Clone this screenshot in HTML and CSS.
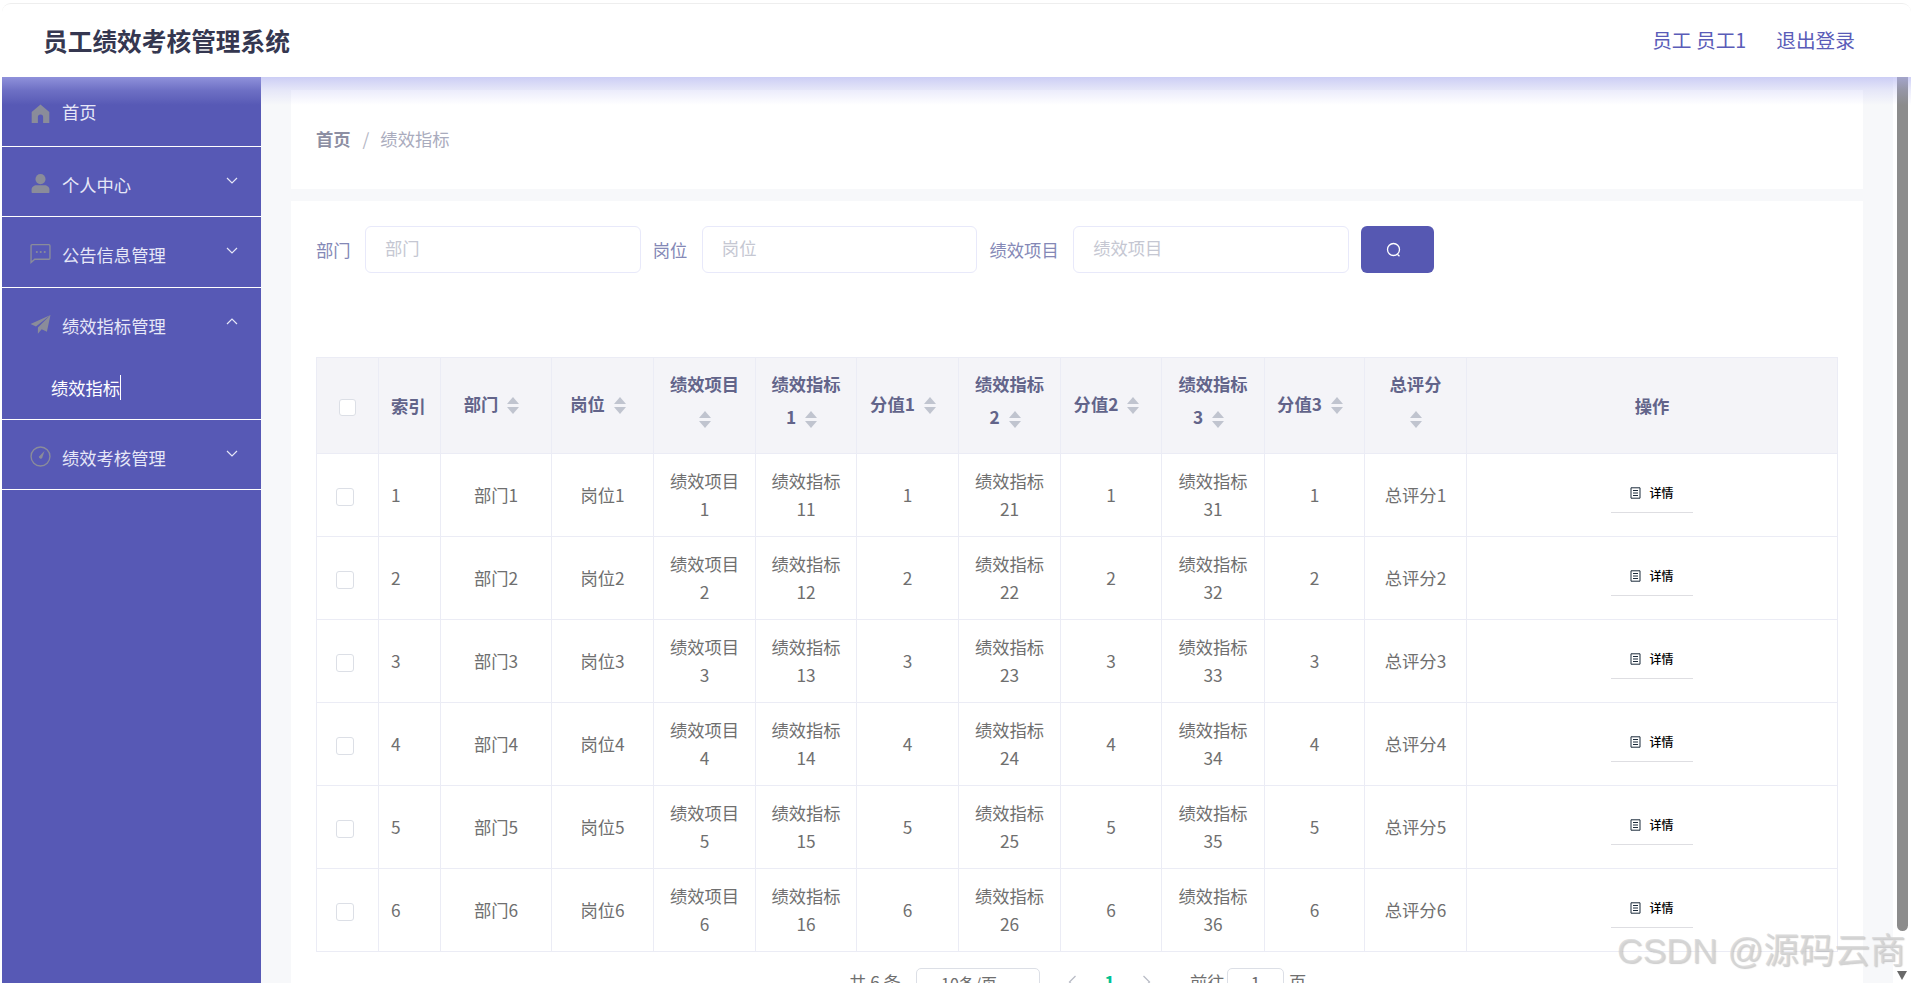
FILE: index.html
```html
<!DOCTYPE html>
<html lang="zh-CN">
<head>
<meta charset="utf-8">
<title>员工绩效考核管理系统</title>
<link rel="stylesheet" href="styles.css">
</head>
<body>
<div class="page">
  <header class="topbar">
    <div class="brand">员工绩效考核管理系统</div>
    <div class="user"><span>员工 员工1</span><span>退出登录</span></div>
  </header>
  <div class="shell">
    <div class="glow"></div>
    <aside class="sidebar">
      <div class="menu-item first">
        <svg class="mi" viewBox="0 0 20 20"><path d="M10 1.500 1.600 8.600V19h5.900v-5.600a2.500 2.500 0 0 1 5 0V19h5.900V8.600z"/></svg>
        <span>首页</span>
      </div>
      <div class="menu-item">
        <svg class="mi" viewBox="0 0 20 20"><circle cx="10" cy="5.800" r="4.800"/><path d="M1.500 18v-2.200c0-2.600 2.400-4.100 4.600-4.100h7.800c2.200 0 4.600 1.500 4.600 4.100V18c0 .6-.4 1-1 1h-15c-.6 0-1-.4-1-1z"/></svg>
        <span>个人中心</span>
        <svg class="chev" viewBox="0 0 12 7"><path d="M1 1l5 5 5-5"/></svg>
      </div>
      <div class="menu-item tall">
        <svg class="mi" viewBox="0 0 20 20"><path class="ol" d="M2 1.500h16a1 1 0 0 1 1 1v12a1 1 0 0 1-1 1H4.500L1 18.500V2.500a1 1 0 0 1 1-1z"/><circle cx="6.500" cy="8.500" r="1"/><circle cx="10.200" cy="8.500" r="1"/><circle cx="14" cy="8.500" r="1"/></svg>
        <span>公告信息管理</span>
        <svg class="chev" viewBox="0 0 12 7"><path d="M1 1l5 5 5-5"/></svg>
      </div>
      <div class="menu-group">
        <div class="group-head">
          <svg class="mi" viewBox="0 0 20 20"><path d="M19.500 1 .5 9.500l5.200 2.300zM19.500 1 7.500 12.800v6l3.600-4.300 5 2.500z"/></svg>
          <span>绩效指标管理</span>
          <svg class="chev" viewBox="0 0 12 7"><path d="M1 6l5-5 5 5"/></svg>
        </div>
        <div class="sub-item"><span class="sub-text">绩效指标</span></div>
      </div>
      <div class="menu-item">
        <svg class="mi" viewBox="0 0 20 20"><circle class="ol" cx="10" cy="10" r="9"/><path d="M13.800 4.800 11.600 11.500a1.900 1.900 0 0 1-3.200-1.300z"/></svg>
        <span>绩效考核管理</span>
        <svg class="chev" viewBox="0 0 12 7"><path d="M1 1l5 5 5-5"/></svg>
      </div>
    </aside>
    <main class="content">
      <section class="crumbs">
        <span class="crumb-home">首页</span><span class="crumb-sep">/</span><span class="crumb-now">绩效指标</span>
      </section>
      <section class="panel">
        <form class="search">
          <label class="lbl">部门</label><input class="field" placeholder="部门">
          <label class="lbl">岗位</label><input class="field" placeholder="岗位">
          <label class="lbl">绩效项目</label><input class="field" placeholder="绩效项目">
          <button class="go" type="button"><svg viewBox="0 0 16 16"><circle cx="7.500" cy="7.500" r="6"/><path d="M11.500 12.500l2 1.800"/></svg></button>
        </form>
        <table class="grid">
          <colgroup>
            <col class="c62"><col class="c62"><col class="c111"><col class="c102"><col class="c102"><col class="c101"><col class="c102"><col class="c102"><col class="c101"><col class="c103"><col class="c100"><col class="c102"><col>
          </colgroup>
          <thead>
            <tr>
              <th><span class="check head"></span></th>
              <th class="left">索引</th>
              <th><div class="solo">部门<i class="sort"></i></div></th>
              <th><div class="solo">岗位<i class="sort"></i></div></th>
              <th><div class="stack">绩效项目<br><i class="sort"></i></div></th>
              <th><div class="stack">绩效指标<br>1<i class="sort"></i></div></th>
              <th><div class="solo">分值1<i class="sort"></i></div></th>
              <th><div class="stack">绩效指标<br>2<i class="sort"></i></div></th>
              <th><div class="solo">分值2<i class="sort"></i></div></th>
              <th><div class="stack">绩效指标<br>3<i class="sort"></i></div></th>
              <th><div class="solo">分值3<i class="sort"></i></div></th>
              <th><div class="stack">总评分<br><i class="sort"></i></div></th>
              <th>操作</th>
            </tr>
          </thead>
          <tbody>
            <tr><td><span class="check"></span></td><td class="left">1</td><td>部门1</td><td>岗位1</td><td>绩效项目<br>1</td><td>绩效指标<br>11</td><td>1</td><td>绩效指标<br>21</td><td>1</td><td>绩效指标<br>31</td><td>1</td><td>总评分1</td><td><a class="detail"><svg viewBox="0 0 11 12"><path d="M1 .8h9v10.400H1zM3 3.500h5M3 6h5M3 8.500h5"/></svg>详情</a></td></tr>
            <tr><td><span class="check"></span></td><td class="left">2</td><td>部门2</td><td>岗位2</td><td>绩效项目<br>2</td><td>绩效指标<br>12</td><td>2</td><td>绩效指标<br>22</td><td>2</td><td>绩效指标<br>32</td><td>2</td><td>总评分2</td><td><a class="detail"><svg viewBox="0 0 11 12"><path d="M1 .8h9v10.400H1zM3 3.500h5M3 6h5M3 8.500h5"/></svg>详情</a></td></tr>
            <tr><td><span class="check"></span></td><td class="left">3</td><td>部门3</td><td>岗位3</td><td>绩效项目<br>3</td><td>绩效指标<br>13</td><td>3</td><td>绩效指标<br>23</td><td>3</td><td>绩效指标<br>33</td><td>3</td><td>总评分3</td><td><a class="detail"><svg viewBox="0 0 11 12"><path d="M1 .8h9v10.400H1zM3 3.500h5M3 6h5M3 8.500h5"/></svg>详情</a></td></tr>
            <tr><td><span class="check"></span></td><td class="left">4</td><td>部门4</td><td>岗位4</td><td>绩效项目<br>4</td><td>绩效指标<br>14</td><td>4</td><td>绩效指标<br>24</td><td>4</td><td>绩效指标<br>34</td><td>4</td><td>总评分4</td><td><a class="detail"><svg viewBox="0 0 11 12"><path d="M1 .8h9v10.400H1zM3 3.500h5M3 6h5M3 8.500h5"/></svg>详情</a></td></tr>
            <tr><td><span class="check"></span></td><td class="left">5</td><td>部门5</td><td>岗位5</td><td>绩效项目<br>5</td><td>绩效指标<br>15</td><td>5</td><td>绩效指标<br>25</td><td>5</td><td>绩效指标<br>35</td><td>5</td><td>总评分5</td><td><a class="detail"><svg viewBox="0 0 11 12"><path d="M1 .8h9v10.400H1zM3 3.500h5M3 6h5M3 8.500h5"/></svg>详情</a></td></tr>
            <tr><td><span class="check"></span></td><td class="left">6</td><td>部门6</td><td>岗位6</td><td>绩效项目<br>6</td><td>绩效指标<br>16</td><td>6</td><td>绩效指标<br>26</td><td>6</td><td>绩效指标<br>36</td><td>6</td><td>总评分6</td><td><a class="detail"><svg viewBox="0 0 11 12"><path d="M1 .8h9v10.400H1zM3 3.500h5M3 6h5M3 8.500h5"/></svg>详情</a></td></tr>
          </tbody>
        </table>
        <nav class="pager">
          <span class="total">共 6 条</span>
          <span class="size">10条/页<svg viewBox="0 0 12 7"><path d="M1 1l5 5 5-5"/></svg></span>
          <svg class="arrow" viewBox="0 0 8 14"><path d="M7 1 1 7l6 6"/></svg>
          <span class="num">1</span>
          <svg class="arrow" viewBox="0 0 8 14"><path d="M1 1l6 6-6 6"/></svg>
          <span class="jump">前往</span>
          <span class="pageno">1</span>
          <span class="unit">页</span>
        </nav>
      </section>
    </main>
    <div class="scrollbar">
      <div class="thumb"></div>
      <div class="down"></div>
    </div>
  </div>
  <div class="watermark">CSDN @源码云商</div>
</div>
</body>
</html>
```
FILE: styles.css
```css
* { box-sizing: border-box; }
html, body { margin: 0; height: 100%; overflow: hidden; background: #fff; }
body { font-family: "Noto Sans CJK SC", "Noto Sans", sans-serif; font-size: 17.300px; color: #6f6f6f; }

.page { position: relative; height: 983px; padding: 3px 0 0 2px; display: flex; flex-direction: column; overflow: hidden; }

.topbar { height: 74px; flex: none; display: flex; align-items: center; justify-content: space-between; padding: 0 56px 0 41px; background: #fff; border-top: 1px solid #eeeeee; border-radius: 9px 9px 0 0; }
.brand { font-size: 24.700px; font-weight: 700; color: #353750; line-height: 1; margin-top: -1px; }
.user { display: flex; gap: 30px; font-size: 19.700px; color: #5a5cb8; line-height: 1; margin-top: -1px; }

.shell { position: relative; flex: 1; min-height: 0; display: flex; }
.glow { position: absolute; left: 0; right: 0; top: 0; height: 28px; z-index: 2; pointer-events: none; background: linear-gradient(rgba(178, 180, 242, .62), rgba(178, 180, 242, .26) 13px, rgba(178, 180, 242, 0) 28px); }

.sidebar { width: 259px; flex: none; background: #5759b5; color: #e6e7f7; }
.menu-item, .group-head { display: flex; align-items: center; padding: 5px 23px 0 28px; height: 70px; }
.menu-item { border-bottom: 1.500px solid #fff; }
.menu-item.first { padding-top: 0; }
.menu-item.tall { height: 71px; }
.menu-group { height: 132px; border-bottom: 1.500px solid #fff; }
.mi { width: 21px; height: 21px; margin: -2px 11px 0 0; flex: none; fill: #8a8c9a; }
.first .mi { margin-top: 4px; }
.mi .ol { fill: none; stroke: #8a8c9a; stroke-width: 1.300; }
.chev { width: 12px; height: 7px; margin: -8px 0 0 auto; fill: none; stroke: #e6e7f7; stroke-width: 1.200; }
.sub-item { height: 60px; padding: 0 0 2px 49px; display: flex; align-items: center; color: #fff; }
.sub-text { border-right: 1px solid #fff; line-height: 25px; }

.content { width: 1632px; flex: none; background: #f7f8fa; padding: 13px 30px 0; }
.crumbs { height: 99px; background: #fff; display: flex; align-items: center; padding: 0 0 2px 25px; }
.crumb-home { font-weight: 700; color: #8d8fa3; }
.crumb-sep { margin: 0 11px 0 12px; color: #b4b6c4; }
.crumb-now { color: #a9abbd; }

.panel { margin-top: 12px; background: #fff; padding: 25px 26px 0 25px; height: 800px; }
.search { display: flex; align-items: center; height: 47px; }
.lbl { color: #8488b6; margin-right: 14.500px; }
.field { width: 275.500px; height: 47px; margin-right: 12.200px; padding: 0 19px 5px; border: 1px solid #e8e9fa; border-radius: 6px; font: inherit; color: inherit; background: #fff; }
.field::placeholder { color: #c5c7d2; }
.go { width: 73px; height: 47px; border: 0; border-radius: 6px; background: #5658b2; display: flex; align-items: center; justify-content: center; padding: 0; }
.go svg { width: 16px; height: 16px; margin: 0 7px 0 0; fill: none; stroke: #fff; stroke-width: 1.300; }

.grid { margin-top: 84px; width: 1522px; table-layout: fixed; border-collapse: collapse; border: 1px solid #ebecf5; text-align: center; line-height: 28px; }
.c62 { width: 62px; } .c100 { width: 100px; } .c101 { width: 101px; } .c102 { width: 102px; } .c103 { width: 103px; } .c111 { width: 111px; }
th, td { border: 1px solid #ebecf5; padding: 0; }
th { height: 96px; background: #f4f4f8; color: #62648a; font-weight: 700; }
td { height: 83px; }
.left { text-align: left; padding-left: 12px; }
.stack { line-height: 33px; margin-bottom: 8px; }
.solo { line-height: 33px; margin-bottom: 2px; }
.sort { display: inline-flex; flex-direction: column; align-items: center; justify-content: center; gap: 3px; width: 30px; height: 33px; vertical-align: middle; }
.sort::before, .sort::after { content: ""; width: 0; height: 0; border-left: 6px solid transparent; border-right: 6px solid transparent; }
.sort::before { border-bottom: 7px solid #c0c4cf; }
.sort::after { border-top: 7px solid #c0c4cf; }
.check { display: block; width: 18px; height: 18px; margin: 3px 0 0 19px; border: 1px solid #dcdfe6; border-radius: 3px; background: #fff; }
.check.head { width: 17px; height: 17px; margin: 4px 0 0 22px; }
.detail { display: inline-flex; align-items: center; justify-content: center; gap: 8px; width: 82px; height: 40px; margin-bottom: 5px; border-bottom: 1px solid #dedee2; font-size: 12px; font-weight: 500; color: #000; line-height: 1; padding-top: 2px; }
.detail svg { width: 11px; height: 12px; fill: none; stroke: #1b2a3a; stroke-width: 1; }

.pager { display: flex; align-items: flex-start; margin: 16px 0 0 533px; line-height: 28px; white-space: nowrap; }
.total { width: 67px; }
.size { position: relative; width: 124px; height: 36px; border: 1px solid #dcdfe6; border-radius: 5px; padding-left: 24px; margin-right: 28px; font-size: 16px; }
.size svg { position: absolute; right: 8px; top: 16px; width: 12px; height: 7px; fill: none; stroke: #c0c4cc; stroke-width: 1.200; }
.arrow { width: 9px; height: 14px; margin-top: 7px; fill: none; stroke: #b9bcc6; stroke-width: 1.300; }
.num { width: 65px; text-align: center; font-weight: 700; color: #00c292; }
.arrow + .num + .arrow { margin-right: 39px; }
.jump { width: 37px; }
.pageno { width: 57px; height: 36px; border: 1px solid #dcdfe6; border-radius: 5px; text-align: center; margin-right: 5px; }

.scrollbar { flex: 1; display: flex; flex-direction: column; align-items: flex-start; padding: 0 0 0 4px; background: #fff; position: relative; }
.thumb { width: 11px; height: 854px; background: #8c8c8c; border-radius: 0 0 6px 6px; }
.down { width: 0; height: 0; margin-top: 40px; border-left: 5.500px solid transparent; border-right: 5.500px solid transparent; border-top: 9px solid #696969; }

.watermark { position: absolute; left: 1617px; top: 926px; font-family: "Liberation Sans", "Noto Sans CJK SC", sans-serif; font-size: 35.500px; line-height: 50px; white-space: nowrap; color: rgba(214, 214, 214, .8); text-shadow: 1px 1px 1px rgba(130, 130, 130, .4); }
```
